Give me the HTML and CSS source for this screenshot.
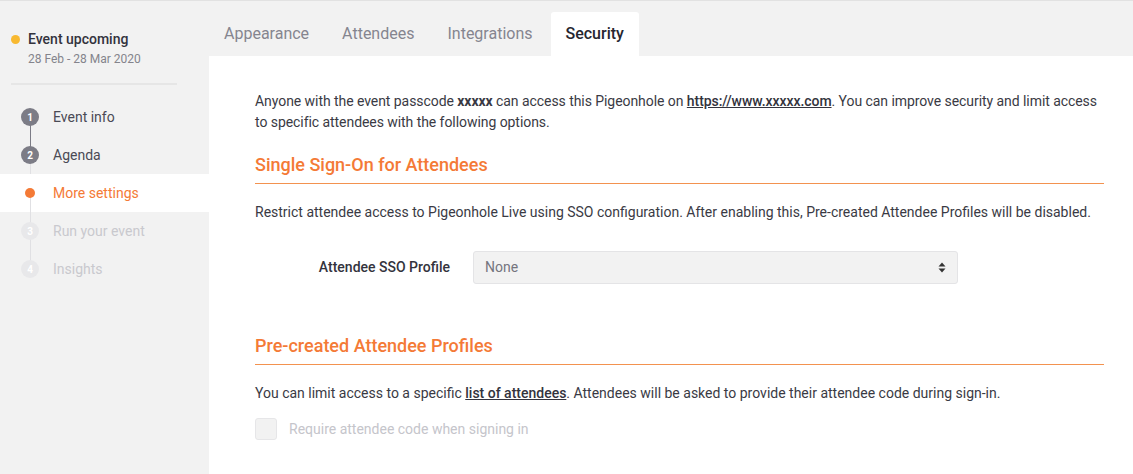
FILE: index.html
```html
<!DOCTYPE html>
<html lang="en">
<head>
<meta charset="utf-8"/>
<title>Pigeonhole Live | Security</title>
<meta content="width=device-width, initial-scale=1.0" name="viewport"/>
<link rel="stylesheet" href="styles.css">
</head>
<body>
<div class="app">
  <aside class="sidebar">
    <div class="event-status">
      <div class="status-title"><span class="status-dot"></span>Event upcoming</div>
      <div class="status-date">28 Feb - 28 Mar 2020</div>
    </div>
    <ul class="steps">
      <li class="step done"><span class="num">1</span>Event info</li>
      <li class="step done last-done"><span class="num">2</span>Agenda</li>
      <li class="step active"><span class="num"></span>More settings</li>
      <li class="step disabled"><span class="num">3</span>Run your event</li>
      <li class="step disabled"><span class="num">4</span>Insights</li>
    </ul>
  </aside>
  <main class="main">
    <nav class="tabs">
      <a class="tab">Appearance</a>
      <a class="tab">Attendees</a>
      <a class="tab">Integrations</a>
      <a class="tab selected">Security</a>
    </nav>
    <section class="panel">
      <p class="intro">Anyone with the event passcode <b>xxxxx</b> can access this Pigeonhole on <a href="#">https://www.xxxxx.com</a>. You can improve security and limit access to specific attendees with the following options.</p>

      <h3 class="section-title">Single Sign-On for Attendees</h3>
      <p>Restrict attendee access to Pigeonhole Live using SSO configuration. After enabling this, Pre-created Attendee Profiles will be disabled.</p>
      <div class="form-row">
        <label>Attendee SSO Profile</label>
        <div class="select">
          <span>None</span>
          <svg width="8" height="11" viewBox="0 0 8 11"><path d="M4 0.5 L7.5 4.5 H0.5 Z M4 10.5 L7.5 6.5 H0.5 Z" fill="#333"/></svg>
        </div>
      </div>

      <h3 class="section-title second">Pre-created Attendee Profiles</h3>
      <p>You can limit access to a specific <a href="#">list of attendees</a>. Attendees will be asked to provide their attendee code during sign-in.</p>
      <div class="check-row">
        <span class="checkbox"></span>
        <span>Require attendee code when signing in</span>
      </div>
    </section>
  </main>
</div>
</body>
</html>
```

FILE: styles.css
```css
body {
  font-family: Roboto, "Liberation Sans", sans-serif;
  background: #f2f2f2;
  margin: 0;
  color: #3a3a44;
  border-top: 1px solid #e2e2e2;
  height: 473px;
  overflow: hidden;
}
.app {
  display: flex;
  height: 100%;
}
.sidebar {
  width: 209px;
  flex-shrink: 0;
}
.event-status {
  margin: 0 32px 0 11px;
  padding: 28px 0 15px;
  border-bottom: 2px solid #e6e6e6;
}
.status-title {
  display: flex;
  align-items: center;
  font-size: 14px;
  font-weight: 500;
  line-height: 20px;
  color: #33333d;
}
.status-dot {
  width: 9px;
  height: 9px;
  border-radius: 50%;
  background: #f8b931;
  margin-right: 8px;
}
.status-date {
  font-size: 12px;
  color: #84848c;
  margin: 2px 0 0 17px;
  line-height: 17px;
}
.steps {
  list-style: none;
  margin: 13px 0 0;
  padding: 0;
}
.step {
  position: relative;
  display: flex;
  align-items: center;
  height: 38px;
  font-size: 14px;
  color: #4a4a55;
}
.step .num {
  width: 18px;
  height: 18px;
  border-radius: 50%;
  background: #7c7c86;
  color: #fff;
  font-size: 10px;
  font-weight: 700;
  display: flex;
  align-items: center;
  justify-content: center;
  margin: 0 14px 0 21px;
  position: relative;
  z-index: 1;
}
.step::after {
  content: "";
  position: absolute;
  left: 30px;
  top: 19px;
  height: 38px;
  width: 1px;
  background: #e0e0e3;
}
.step:last-child::after { display: none; }
.step.done::after { background: #7c7c86; }
.step.last-done::after { background: #e0e0e3; }
.step.active {
  background: #fff;
  color: #f47a36;
}
.step.active .num {
  width: 10px;
  height: 10px;
  background: #f47a36;
  margin: 0 18px 0 25px;
}
.step.disabled { color: #c9c9ce; }
.step.disabled .num {
  background: #e8e8ea;
  color: #fff;
}
.main {
  flex: 1;
  display: flex;
  flex-direction: column;
}
.tabs {
  display: flex;
  gap: 3px;
  padding-top: 11px;
  height: 44px;
}
.tab {
  padding: 0 15px;
  font-size: 16px;
  line-height: 43px;
  color: #85858f;
  border-radius: 3px 3px 0 0;
}
.tab.selected {
  background: #fff;
  color: #262630;
  font-weight: 500;
}
.panel {
  flex: 1;
  background: #fff;
  padding: 35px 29px 0 46px;
  font-size: 14px;
  line-height: 21px;
}
.panel p { margin: 0; }
.panel .intro { letter-spacing: -0.06px; }
.panel a {
  color: #33333d;
  text-decoration: underline;
  font-weight: 500;
}
.panel b { font-weight: 700; }
.section-title {
  font-size: 18px;
  font-weight: 500;
  color: #f47a36;
  line-height: 22px;
  margin: 21px 0 18px;
  padding-bottom: 7px;
  border-bottom: 1px solid #f3924f;
}
.section-title.second { margin-top: 51px; }
.form-row {
  display: flex;
  align-items: center;
  margin-top: 28px;
}
.form-row label {
  width: 195px;
  text-align: right;
  font-weight: 500;
  color: #33333d;
  margin-right: 23px;
}
.select {
  height: 31px;
  background: #f2f2f2;
  border: 1px solid #e4e4e6;
  border-radius: 3px;
  display: flex;
  align-items: center;
  justify-content: space-between;
  padding: 0 11px;
  width: 461px;
  color: #75757e;
}
.check-row {
  display: flex;
  align-items: center;
  margin-top: 14px;
  color: #c5c5cb;
}
.checkbox {
  width: 20px;
  height: 20px;
  border: 1px solid #e6e6e8;
  background: #f2f2f2;
  border-radius: 3px;
  margin-right: 12px;
}
```
